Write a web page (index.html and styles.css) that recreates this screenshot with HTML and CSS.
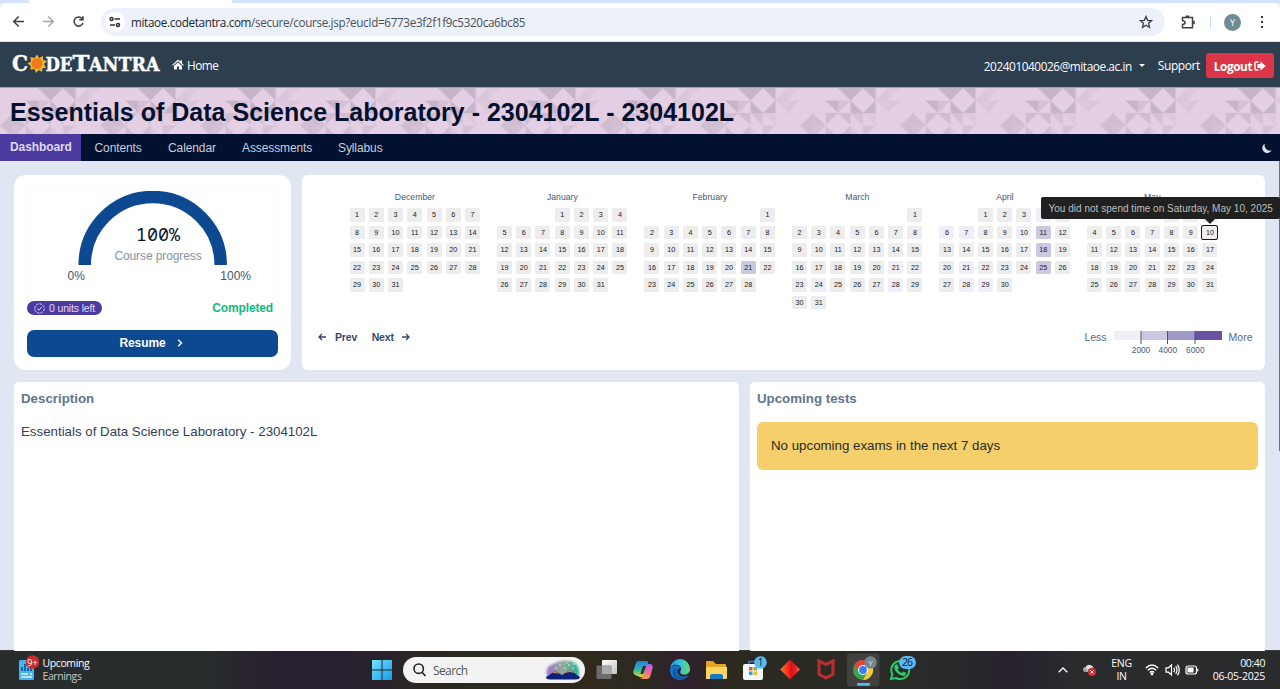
FILE: index.html
```html
<!DOCTYPE html>
<html lang="en">
<head>
<meta charset="utf-8">
<title>Essentials of Data Science Laboratory</title>
<link rel="stylesheet" href="styles.css">
</head>
<body>
<div class="tabstrip"><div class="tab"></div></div>
<div class="toolbar">
  <svg class="tool-nav" width="92" height="38" viewBox="0 0 92 38" fill="none" stroke="#3c4043" stroke-width="1.500">
    <path d="M24 18.500H14M18.700 13.500L13.700 18.500L18.700 23.500"/>
    <path stroke="#a5a7aa" d="M43 18.500H53M48.300 13.500L53.300 18.500L48.300 23.500"/>
    <path d="M82.300 15.700A4.600 4.600 0 1 0 83 20M83 13.200V16.800H79.300"/>
  </svg>
  <div class="address">
    <span class="site-info"><svg width="12" height="12" viewBox="0 0 12 12" fill="none" stroke="#333" stroke-width="1.500"><circle cx="2.500" cy="3" r="1.500"/><path d="M5.500 3H11M1 9H6"/><circle cx="9" cy="9" r="1.500"/></svg></span>
    <span class="url"><b>mitaoe.codetantra.com</b>/secure/course.jsp?eucId=6773e3f2f1f9c5320ca6bc85</span>
    <svg class="star" width="14" height="14" viewBox="0 0 14 14" fill="none" stroke="#3c4043" stroke-width="1.300"><path d="M7 1.500L8.600 5.300L12.700 5.600L9.600 8.300L10.500 12.300L7 10.200L3.500 12.300L4.400 8.300L1.300 5.600L5.400 5.300Z"/></svg>
  </div>
  <svg class="ext" width="15" height="15" viewBox="0 0 15 15" fill="none" stroke="#3c4043" stroke-width="1.500"><path d="M1.500 2.500H11.500V12.800H1.500V9.500Q4 9.500 4 7.600Q4 5.700 1.500 5.700Z"/><path fill="#3c4043" d="M5.500 2V1.300H7.500V2M12.200 6.500H13V8.500H12.200"/></svg>
  <span class="tool-sep"></span>
  <span class="avatar">Y</span>
  <span class="dots"><i></i><i></i><i></i></span>
</div>
<header class="site">
  <svg class="logo" width="150" height="36" viewBox="0 -5 150 36" fill="#fff" stroke="#fff" stroke-width=".45" font-family="DejaVu Serif, serif" font-weight="bold">
    <text x="0" y="20" font-size="23" textLength="16" lengthAdjust="spacingAndGlyphs">C</text>
    <path stroke="none" fill="#e9b93c" d="M25 3.500L27.300 7L31 5L31 9L35 10L32 13L34 17L30.500 17.300L30 21L26.700 19L24 22L22.500 18L18 18.500L19 15L15.500 12.500L19 10.500L18.500 6L22.500 7Z"/><circle stroke="none" cx="25" cy="12.500" r="5.500" fill="#f07b16"/>
    <text x="33.500" y="20" font-size="18" textLength="27" lengthAdjust="spacingAndGlyphs">DE</text>
    <text x="60.500" y="20" font-size="23" textLength="17" lengthAdjust="spacingAndGlyphs">T</text>
    <text x="77" y="20" font-size="18" textLength="70.500" lengthAdjust="spacingAndGlyphs">ANTRA</text>
  </svg>
  <svg class="house" width="12" height="11" viewBox="0 0 12 11" fill="#fff"><path d="M6 .6L8.400 2.800V1.200H10V4.200L11.800 5.900L11.100 6.700L6 2.200L.9 6.700L.2 5.900ZM2 6.900L6 3.400L10 6.900V10.500H7.100V7.500H4.900V10.500H2Z"/></svg>
  <span class="home">Home</span>
  <span class="mail">202401040026@mitaoe.ac.in</span><span class="caret"></span>
  <span class="support">Support</span>
  <span class="logout"><span>Logout</span><svg width="12" height="10" viewBox="0 0 12 10"><path d="M4.500 1H2Q1 1 1 2V8Q1 9 2 9H4.500" fill="none" stroke="#fff" stroke-width="1.500"/><path fill="#fff" d="M3.500 3H6.500V.5L11.700 5L6.500 9.500V7H3.500Z"/></svg></span>
</header>
<div class="banner">
  <svg class="pattern" width="1280" height="47">
    <defs><pattern id="tri" width="100" height="50" patternUnits="userSpaceOnUse" patternTransform="translate(.5 0)">
      <g fill="#c6b4c8">
        <path d="M50 0H62.500L50 12.500ZM75 0V12.500L62.500 0ZM50 25V12.500L62.500 25ZM75 25H62.500L75 12.500Z"/>
        <path d="M37.500 0H50V12.500ZM25 12.500H37.500V25Z"/>
        <path opacity=".65" d="M0 37.500L12.500 25V37.500ZM12.500 25L25 37.500H12.500ZM0 37.500H12.500V50Z"/>
        <path opacity=".65" d="M25 25H37.500L25 37.500ZM50 25V37.500L37.500 25ZM25 50V37.500L37.500 50ZM50 50H37.500L50 37.500Z"/>
        <path opacity=".5" d="M50 25H62.500V37.500ZM62.500 37.500H75L62.500 50ZM37.500 12.500H50L37.500 25ZM12.500 37.500H25L12.500 50Z"/>
        <path opacity=".35" d="M75 12.500L87.500 0V12.500ZM87.500 12.500H100L87.500 25Z"/>
        <path opacity=".25" d="M75 12.500H87.500V25ZM62.500 25H75V37.500ZM50 37.500L62.500 50H50ZM87.500 0H100L87.500 12.500Z"/>
      </g>
      <path fill="none" stroke="#d3bdd5" stroke-width=".6" opacity=".4" d="M0 12.500L12.500 0L25 12.500L12.500 25ZM75 37.500L87.500 25L100 37.500L87.500 50ZM0 0V50M75 0V50M0 25H100"/>
    </pattern></defs>
    <rect width="1280" height="47" fill="#e4cfe4"/><rect width="1280" height="47" fill="url(#tri)"/>
  </svg>
  <h1>Essentials of Data Science Laboratory - 2304102L - 2304102L</h1>
</div>
<nav>
  <span class="active">Dashboard</span><span class="n2">Contents</span><span class="n3">Calendar</span><span class="n4">Assessments</span><span class="n5">Syllabus</span>
  <svg class="moon" width="10" height="10" viewBox="0 0 10 10"><path fill="#dfe3f3" d="M3 .5A5 5 0 1 0 9.700 7.300A5.200 5.200 0 0 1 3 .5Z"/></svg>
</nav>
<main>
  <section class="card progress">
    <div class="gauge-box">
      <svg class="gauge" width="150" height="74" viewBox="0 0 150 74"><path d="M6.700 74V74A68 68 0 0 1 142.700 74" fill="none" stroke="#0d4990" stroke-width="12.500"/></svg>
      <div class="gauge-text"><div class="pct">100%</div><div class="cp">Course progress</div></div>
      <div class="ends"><span>0%</span><span>100%</span></div>
      <div class="status"><span class="badge"><svg width="11" height="11" viewBox="0 0 11 11" fill="none" stroke="#ddd5fa"><circle cx="5.500" cy="5.500" r="4.700" stroke-dasharray="2.600 1"/><path d="M3.300 5.600L5 7.200L7.700 4"/></svg>0 units left</span><span class="done">Completed</span></div>
    </div>
    <div class="resume">Resume<svg width="6" height="8" viewBox="0 0 6 8" fill="none" stroke="#fff" stroke-width="1.400"><path d="M1.200 .8L4.500 4L1.200 7.200"/></svg></div>
  </section>
  <section class="card heat">
    <div class="months" id="months"></div>
    <div class="heat-foot">
      <svg width="8" height="8" viewBox="0 0 8 8" fill="none" stroke="#334a6d" stroke-width="1.300"><path d="M8 4H1M4 1L1 4L4 7"/></svg><span class="prev">Prev</span><span class="next">Next</span><svg width="8" height="8" viewBox="0 0 8 8" fill="none" stroke="#334a6d" stroke-width="1.300"><path d="M0 4H7M4 1L7 4L4 7"/></svg>
      <span class="less">Less</span>
      <svg class="legend" width="108" height="26" viewBox="0 0 108 26" font-family="Liberation Sans" font-size="8.300" font-weight="400" fill="#475a75" text-anchor="middle"><path fill="#f1eff6" d="M0 0H27V9H0Z"/><path fill="#cbc8e1" d="M27 0H54V9H27Z"/><path fill="#9e99c8" d="M54 0H81V9H54Z"/><path fill="#6951a3" d="M81 0H108V9H81Z"/><path stroke="#465377" d="M27 0V13M53.500 0V13M81 0V13"/><text x="27" y="21.500">2000</text><text x="53.800" y="21.500">4000</text><text x="81.300" y="21.500">6000</text></svg>
      <span class="more">More</span>
    </div>
    <div class="tooltip">You did not spend time on Saturday, May 10, 2025</div>
  </section>
  <section class="card desc"><h2>Description</h2><p>Essentials of Data Science Laboratory - 2304102L</p></section>
  <section class="card tests"><h2>Upcoming tests</h2><div class="alert">No upcoming exams in the next 7 days</div></section>
  <div class="scroll"></div>
</main>
<footer>
  <svg class="news" width="22" height="28" viewBox="0 0 22 28"><rect x="1" y="5" width="15" height="20" rx="1.500" fill="#43b5ef"/><path fill="#1464a5" d="M3 12H5V16H3ZM6 9H8V16H6ZM9 13H11V16H9ZM12 11H14V16H12Z"/><path stroke="#d9f3ff" stroke-width="1.500" d="M3 19H10M12 19H14M3 22H14"/><circle cx="14.500" cy="7" r="6.800" fill="#c82e27"/><text x="14.500" y="10.500" text-anchor="middle" font-family="Open Sans" font-size="9" fill="#fff">9+</text></svg>
  <div class="news-text">Upcoming<br><span>Earnings</span></div>
  <svg class="win" width="20" height="20" viewBox="0 0 20 20"><defs><linearGradient id="w" x2="1" y2="1"><stop stop-color="#75e2ff"/><stop offset="1" stop-color="#139be9"/></linearGradient></defs><path fill="url(#w)" d="M0 0H9.500V9.500H0ZM10.500 0H20V9.500H10.500ZM0 10.500H9.500V20H0ZM10.500 10.500H20V20H10.500Z"/></svg>
  <div class="search"><svg width="13" height="14" viewBox="0 0 13 14" fill="none" stroke="#222" stroke-width="1.600"><circle cx="5.700" cy="5.700" r="4.700"/><path d="M9 9.300L12.500 13"/></svg><span>Search</span>
    <svg class="scene" width="38" height="24" viewBox="0 0 38 24"><defs><linearGradient id="sc"><stop stop-color="#9a76d1"/><stop offset=".5" stop-color="#93aa98"/><stop offset="1" stop-color="#24b596"/></linearGradient><filter id="soft" x="-20%" y="-20%" width="140%" height="140%"><feGaussianBlur stdDeviation="1.200"/></filter></defs><path filter="url(#soft)" fill="url(#sc)" d="M3 18Q1 8 9 6Q17 1 25 3Q36 4 35 18Z"/><path fill="#102277" d="M2 19L11 13L18 17L26 12L36 19Q36 21.500 31 21.500H6Q2 21.500 2 19Z"/><path fill="#d88c50" d="M8 15L11 13L15 16L11 15ZM21 15L26 12L30 15L26 14Z"/><g fill="#fff"><circle cx="16" cy="7" r=".7"/><circle cx="21" cy="10" r=".7"/><circle cx="25" cy="7" r=".8"/><circle cx="29" cy="10" r=".7"/><circle cx="12" cy="10" r=".7"/><circle cx="23" cy="5" r=".6"/><circle cx="30" cy="6" r=".7"/></g></svg>
  </div>
  <svg class="apps" width="340" height="39" viewBox="595 650 340 39">
    <defs><linearGradient id="tv" x2="1" y2="1"><stop stop-color="#fff"/><stop offset="1" stop-color="#c4c4c4"/></linearGradient><linearGradient id="cp1" x2="0" y2="1"><stop stop-color="#1686ee"/><stop offset=".55" stop-color="#33b69b"/><stop offset="1" stop-color="#ecd531"/></linearGradient><linearGradient id="cp2" x2="0" y2="1"><stop stop-color="#a463f0"/><stop offset=".5" stop-color="#f5629d"/><stop offset="1" stop-color="#ff9c4b"/></linearGradient><linearGradient id="ed" x2="1"><stop stop-color="#1994dc"/><stop offset=".5" stop-color="#31c3dd"/><stop offset="1" stop-color="#6ad862"/></linearGradient><linearGradient id="dm"><stop stop-color="#ff7a28"/><stop offset=".48" stop-color="#ff1b18"/><stop offset=".5" stop-color="#d5101d"/><stop offset=".8" stop-color="#e6232a"/><stop offset="1" stop-color="#ff8751"/></linearGradient></defs>
    <rect x="602" y="660" width="15" height="14" rx="1" fill="url(#tv)"/><rect x="596.500" y="665.500" width="15" height="13.500" rx="1" fill="#777" opacity=".85"/><rect x="602" y="665.500" width="9.500" height="8.500" fill="#aaa"/>
    <path fill="url(#cp1)" d="M638 661H646Q649 661 648 664L644 676Q643 678 640 677L635 675Q632 673 634 669L636 663Q636.500 661 638 661Z"/><path fill="url(#cp2)" d="M648 664H651Q654 666 652 670L650 677Q649 679 647 679H640Q643 678 644 675L646 667Q646.500 664 648 664Z"/><path fill="#2a2a27" d="M643 666H646L643 674H640.500Z"/>
    <path fill="url(#ed)" d="M670 669A10 10 0 0 1 690 669C690 676 681 676 680 672C681 670 682 668 680 666C675 663 670 666 670 671Z"/><path fill="#1677cf" d="M670 669C673 664 680 665 681 668C677 668 676 672 679 675C682 678 687 677 689 674C686 680 680 681 676 679C671 677 670 673 670 669Z"/><path fill="#0e56a7" d="M677 668C673 673 679 680 687 677C682 681 675 680 673 675C672 671 674 668 677 668Z"/>
    <path fill="#e6a526" d="M706 662Q706 661 707 661H713L716 664H725Q726 664 726 665V679H706Z"/><path fill="#ffd662" d="M706 667H727V678Q727 679 726 679H707Q706 679 706 678Z"/><path fill="#167ac3" d="M710 679V676Q710 674 712 674H721Q723 674 723 676V679Z"/>
    <path fill="none" stroke="#258bd6" stroke-width="1.500" d="M749 666V661.500H757V666"/><rect x="743" y="664" width="20" height="16" rx="2" fill="#f6f7fa"/><path fill="#ef5326" d="M749 667H752.500V670.500H749Z"/><path fill="#7ab63a" d="M753.500 667H757V670.500H753.500Z"/><path fill="#27a2e5" d="M749 671.500H752.500V675H749Z"/><path fill="#f5b928" d="M753.500 671.500H757V675H753.500Z"/><circle cx="760.500" cy="662.500" r="6.300" fill="#58b9f5"/>
    <path fill="url(#dm)" d="M790 659.500L799.800 669.500L790 679.500L780.200 669.500Z"/>
    <path fill="none" stroke="#b52e31" stroke-width="3.200" d="M819 661V674.300L826 678L833 674.300V661L826 664.500Z"/>
    <rect x="847" y="653.500" width="32.500" height="33" rx="3" fill="#414240"/>
    <circle cx="863" cy="670" r="10" fill="#37a451"/><path fill="#e94435" d="M854.300 665A10 10 0 0 1 871.700 665H863V670H857Z"/><path fill="#fcc934" d="M871.700 665A10 10 0 0 1 863 680L867.300 672.500L863 665Z"/><circle cx="863" cy="670" r="5" fill="#fff"/><circle cx="863" cy="670" r="3.900" fill="#3a7bed"/><circle cx="870.500" cy="662.500" r="6.200" fill="#74878f"/><rect x="857" y="683" width="13" height="2.700" rx="1.300" fill="#58b9f5"/>
    <path fill="#292b28" stroke="#27cf67" stroke-width="2" d="M891 679L892.400 674.500A9 9 0 1 1 896 678Z"/><path fill="#27cf67" d="M895 665L897 664L899 668L897.500 669.500Q899 672 902 673L903.500 671.500L906 673Q906 676 903 676Q896 674 894.500 669Q894 666 895 665Z"/><rect x="899" y="656" width="17" height="13" rx="6.500" fill="#58b9f5"/>
    <g text-anchor="middle" font-family="Open Sans" fill="#101820"><text x="760.500" y="666" font-size="10">1</text><text x="870.500" y="665.500" font-size="8" fill="#e6eded">Y</text><text x="907.500" y="666.300" font-size="10.500" textLength="11">26</text></g>
  </svg>
  <svg class="tray-up" width="10" height="6" viewBox="0 0 10 6" fill="none" stroke="#fff" stroke-width="1.300"><path d="M.7 5.300L5 1L9.300 5.300"/></svg>
  <svg class="cloud" width="15" height="14" viewBox="0 0 15 14"><path fill="#aaa" d="M4 9Q1 9 1 6.500Q1 4 3.500 4Q5 1 8 2Q11 2 12 6V9Z"/><path fill="#e3e3e3" d="M4 4Q7 0 11 4L5 7Z"/><circle cx="10" cy="9" r="4.200" fill="#d92835"/><path stroke="#fff" d="M8.400 7.400L11.600 10.600M11.600 7.400L8.400 10.600"/></svg>
  <div class="lang">ENG<br>IN</div>
  <svg class="tray" width="54" height="14" viewBox="0 0 54 14" fill="none" stroke="#fff" stroke-width="1.200"><path d="M.8 5Q7 -1 13.200 5M2.800 7.300Q7 3.200 11.200 7.300M4.800 9.500Q7 7.500 9.200 9.500"/><circle cx="7" cy="11" r=".8" fill="#fff"/><path d="M21 4.800H23.500L26.500 2V12L23.500 9.200H21ZM28.700 4.800Q30.500 7 28.700 9.200M30.700 3.200Q33.300 7 30.700 10.800M32.500 1.700Q36 7 32.500 12.300"/><rect x="41" y="3" width="10.500" height="8" rx="2"/><path fill="#fff" d="M43 5H48V9H43ZM52.800 5.800V8.200"/></svg>
  <div class="clock"><span>00:40</span><br>06-05-2025</div>
</footer>
<script src="script.js"></script>
</body>
</html>
```
FILE: styles.css
```css
* { box-sizing: border-box; }
body { margin: 0; width: 1280px; height: 689px; overflow: hidden; display: flex; flex-direction: column; background: #e1e7f2; font-family: "Liberation Sans", Arial, sans-serif; color: #334155; }
svg { display: block; flex: none; }
span { white-space: nowrap; }
.tabstrip { height: 3px; background: #d3e3fd; padding-left: 29px; flex: none; }
.tab { width: 203px; height: 3px; background: #fff; }
.toolbar { height: 39px; flex: none; display: flex; align-items: center; background: #fff; border-bottom: 1px solid #dde0e6; border-radius: 6px 6px 0 0; font-family: "Open Sans", sans-serif; }
.tool-nav { margin-right: 9px; }
.address { width: 1064px; height: 28px; border-radius: 14px; background: #edf1fa; display: flex; align-items: center; }
.site-info { width: 20px; height: 20px; border-radius: 50%; background: #fff; margin-left: 4px; display: flex; align-items: center; justify-content: center; }
.url { font-size: 11.7px; letter-spacing: -.34px; margin-left: 6px; color: #4b5057; }
.url b { font-weight: 400; color: #25282c; }
.star { margin-left: auto; margin-right: 12px; }
.ext { margin-left: 16px; }
.tool-sep { width: 1px; height: 13px; background: #c9dcf5; margin-left: 14px; }
.avatar { width: 17px; height: 17px; border-radius: 50%; background: #718b96; color: #fff; font-size: 9px; line-height: 17px; text-align: center; margin-left: 13px; }
.dots { display: grid; gap: 3px; margin-left: 20px; }
.dots i { width: 2px; height: 2px; background: #333; }
.site { height: 45px; flex: none; background: #2d3e4f; display: flex; align-items: center; color: #fff; font-family: "Open Sans", sans-serif; font-size: 12px; padding: 2px 6px 0 12px; }
.logo { margin-top: -3px; }
.house { margin-left: 10px; margin-top: -2px; }
.home { margin-left: 3px; margin-top: -2px; font-size: 11.8px; letter-spacing: -.5px; }
.mail { margin-left: auto; font-size: 11.8px; letter-spacing: -.42px; }
.caret { border: 3px solid transparent; border-top: 3px solid #fff; border-bottom: 0; margin-left: 7px; margin-top: -1px; }
.support { margin-left: 13px; letter-spacing: -.4px; }
.logout { width: 68px; height: 25px; margin-left: 6px; border-radius: 3px; background: #dc3547; font-weight: 700; font-size: 11.8px; letter-spacing: -.4px; display: flex; align-items: center; justify-content: center; gap: 2px; }
.banner { height: 47px; flex: none; position: relative; overflow: hidden; border-top: 1px solid #a999b0; }
.pattern { position: absolute; inset: 0; }
h1 { position: relative; margin: 0; padding-left: 10px; font-size: 25px; letter-spacing: .01px; line-height: 48px; color: #03112f; white-space: nowrap; }
nav { height: 27px; flex: none; display: flex; align-items: center; background: #02112f; color: #c8ceda; font-size: 12px; letter-spacing: -.1px; }
.active { background: #4c3aa0; height: 27px; width: 81px; line-height: 27px; padding-left: 10px; font-weight: 700; color: #dfd9f7; }
nav .n2 { margin-left: 13.5px; width: 73.5px; } nav .n3 { width: 74px; } nav .n4 { width: 96px; }
.moon { margin-left: auto; margin-right: 8px; }
main { position: relative; height: 489px; flex: none; padding: 14px 15px 0 14px; display: grid; grid-template-columns: repeat(1251, 1px); grid-template-rows: 195px 269px; row-gap: 11.5px; }
.card { background: #fff; }
.progress { grid-column: 1 / 278; border-radius: 12px; padding: 13px 13px 0; }
.gauge-box { height: 133px; border: 1px solid #fafafb; border-radius: 5px; display: flex; flex-direction: column; }
.gauge { margin: 2px 0 0 50px; }
.gauge-text { margin-top: -44px; height: 44px; text-align: center; padding-left: 11px; }
.pct { font: 18.5px/26px "Noto Sans Mono", "DejaVu Sans Mono", monospace; color: #07142f; }
.cp { font-size: 12px; letter-spacing: -.1px; line-height: 18px; color: #8792a6; }
.ends { display: flex; justify-content: space-between; padding: 3px 26px 0 39.5px; font-size: 12px; line-height: 17px; color: #475569; }
.status { margin-top: 16px; display: flex; justify-content: space-between; align-items: center; padding-right: 4px; }
.badge { width: 75px; height: 14px; margin-left: -1px; border-radius: 7px; background: #4c3aa0; color: #e0daf8; display: flex; align-items: center; padding-left: 7px; gap: 4px; font-size: 10.5px; letter-spacing: -.15px; }
.done { color: #13b981; font-weight: 700; font-size: 12px; letter-spacing: -.15px; line-height: 14px; }
.resume { height: 27px; margin-top: 9px; background: #0d4990; border-radius: 7px; color: #fff; font-weight: 700; font-size: 12px; letter-spacing: -.1px; display: flex; align-items: center; justify-content: center; gap: 11px; padding: 0 3px 2px 0; }
.heat { grid-column: 289 / 1252; border-radius: 6px; position: relative; padding: 17px 0 0 47.5px; }
.months { display: flex; height: 138px; gap: 16.7px; }
.month { width: 130.8px; flex: none; }
.month-name { text-align: center; font-size: 8.7px; line-height: 11px; height: 16px; color: #475a75; }
.days { display: grid; grid-template-columns: repeat(7, 15px); column-gap: 4.25px; grid-auto-rows: 13.5px; row-gap: 4px; }
.day { background: #ededee; border-radius: 1.5px; font-size: 7.2px; line-height: 14px; text-align: center; color: #16181d; }
.l1 { background: #f0eef8; } .l2 { background: #cbc8e2; }
.focus { box-shadow: 0 0 0 1px #161616; background: #f1edf0; }
.heat-foot { display: flex; align-items: center; height: 14px; margin-left: -31.5px; color: #334a6d; font-weight: 700; font-size: 10.5px; letter-spacing: -.15px; }
.prev { margin-left: 9px; } .next { margin: 0 8px 0 14.5px; }
.less, .more { font-weight: 400; color: #596b84; letter-spacing: 0; }
.less { margin-left: auto; }
.legend { margin: 13px 7px 0; letter-spacing: 0; }
.more { margin-right: 12.5px; }
.tooltip { position: absolute; left: 739px; top: 22px; width: 239px; height: 22px; background: #202020; border-radius: 2px; color: #bfbfbf; font-size: 10px; line-height: 23px; padding-left: 7.5px; white-space: nowrap; letter-spacing: .02px; z-index: 2; }
.tooltip::after { content: ""; position: absolute; left: 164px; top: 22px; border: 5px solid transparent; border-top-color: #202020; border-bottom: 0; }
.desc { grid-column: 1 / 726; } .tests { grid-column: 738 / 1252; margin-left: -1px; }
.desc, .tests { border-radius: 5px 5px 0 0; padding: 8px 7px 0; }
h2 { margin: 0; font-size: 13.3px; line-height: 18px; color: #64748b; }
.desc p { margin: 15px 0 0; font-size: 13.3px; line-height: 18px; color: #334155; }
.alert { margin-top: 14.5px; height: 48px; border-radius: 6px; background: #f4cf6b; padding-left: 14px; line-height: 48px; font-size: 13.3px; color: #282b2c; }
.scroll { position: absolute; right: 0; top: 0; width: 1px; height: 290px; background: #6d7077; }
footer { height: 39px; flex: none; display: flex; align-items: center; background: linear-gradient(90deg, #292c2c 0, #292c2c 210px, #28202f 270px, #28202f 350px, #2b2a1e 470px, #30291c 590px, #2c2924 650px, #30202f 680px, #2b291e 730px, #292b28 880px, #282a2a 960px, #27212f 1010px, #292b2c 1070px); border-top: 1px solid #3a3b3b; color: #fff; font-family: "Open Sans", sans-serif; font-size: 10.5px; line-height: 13px; }
.news { margin-left: 18px; margin-top: -3px; }
.news-text { margin-left: 2.5px; width: 70px; letter-spacing: -.4px; } .news-text span { color: #c7c8c8; }
.win { margin-left: 259.5px; }
.search { width: 182px; height: 26px; border-radius: 13px; background: #f3f3f3; margin-left: 11px; display: flex; align-items: center; padding: 0 3px 0 10px; color: #555; font-size: 12px; }
.search span { margin-left: 7px; letter-spacing: -.6px; }
.scene { margin-left: auto; }
.apps { margin-left: 10px; margin-top: -1px; }
.tray-up { margin-left: 122.5px; }
.cloud { margin-left: 14px; }
.lang { margin-left: 8px; width: 34px; text-align: center; letter-spacing: -.3px; }
.tray { margin-left: 6.5px; }
.clock { margin-left: auto; margin-right: 15px; text-align: right; letter-spacing: -.25px; }
.clock span { letter-spacing: -.4px; }
```
FILE: script.js
```js
const months = [
  { name: "December", start: 0, days: 31 },
  { name: "January", start: 3, days: 31 },
  { name: "February", start: 6, days: 28, l2: [21] },
  { name: "March", start: 6, days: 31, l1: [21, 24, 28] },
  { name: "April", start: 2, days: 30, l1: [4, 6, 7, 10, 21, 28, 29], l2: [11, 18, 25] },
  { name: "May", start: 4, days: 31, focus: 10 }
];
const root = document.getElementById("months");
for (const m of months) {
  const box = document.createElement("div");
  box.className = "month";
  const name = document.createElement("div");
  name.className = "month-name";
  name.textContent = m.name;
  const grid = document.createElement("div");
  grid.className = "days";
  for (let d = 1; d <= m.days; d++) {
    const cell = document.createElement("span");
    cell.className = "day";
    if ((m.l1 || []).includes(d)) cell.classList.add("l1");
    if ((m.l2 || []).includes(d)) cell.classList.add("l2");
    if (m.focus === d) cell.classList.add("focus");
    if (d === 1) cell.style.gridColumnStart = m.start + 1;
    cell.textContent = d;
    grid.append(cell);
  }
  box.append(name, grid);
  root.append(box);
}
```
